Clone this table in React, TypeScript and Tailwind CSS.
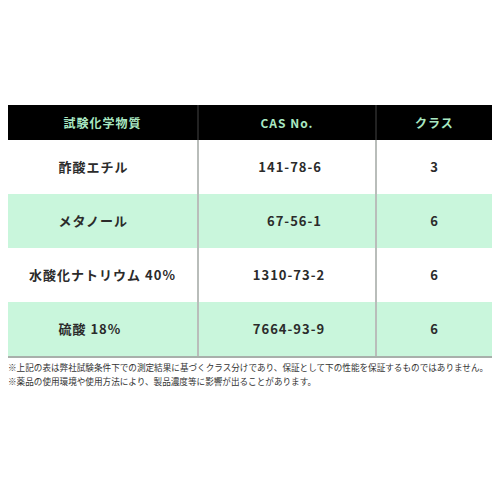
import React from 'react';

interface Row {
  name: string;
  cas: string;
  grade: string;
}

const rows: Row[] = [
  { name: '酢酸エチル', cas: '141-78-6', grade: '3' },
  { name: 'メタノール', cas: '67-56-1', grade: '6' },
  { name: '水酸化ナトリウム 40%', cas: '1310-73-2', grade: '6' },
  { name: '硫酸 18%', cas: '7664-93-9', grade: '6' },
];

export default function App() {
  return (
    <div
      className="w-[500px] h-[500px] bg-white px-2 pt-[105px]"
      style={{ fontFamily: '"Noto Sans CJK JP", "Noto Sans", sans-serif' }}
    >
      {/* Table */}
      <div className="border-b-2 border-[#a8b0ab]">
        <div className="grid grid-cols-[189px_178px_1fr] h-[35px] bg-black text-[#a9e8c2] text-[12px] font-bold tracking-[1px]">
          <div className="flex items-center justify-center">試験化学物質</div>
          <div className="flex items-center justify-center border-l-2 border-[#222]">CAS No.</div>
          <div className="flex items-center justify-center border-l-2 border-[#222]">クラス</div>
        </div>
        {rows.map((r, i) => (
          <div
            key={r.cas}
            className={`grid grid-cols-[189px_178px_1fr] h-[54px] text-[13px] font-bold tracking-[1px] text-[#2b2b2b] ${
              i % 2 === 1 ? 'bg-[#c9f6dc]' : 'bg-white'
            }`}
          >
            <div className="flex items-center justify-center">
              <span className="min-w-[88px] text-left whitespace-nowrap">{r.name}</span>
            </div>
            <div className="flex items-center justify-center border-l-2 border-[#b9bdba]">
              <span className="min-w-[70px] text-right pl-[4px]">{r.cas}</span>
            </div>
            <div className="flex items-center justify-center border-l-2 border-[#b9bdba]">{r.grade}</div>
          </div>
        ))}
      </div>

      {/* Notes */}
      <div className="pt-[2px] text-[8.6px] leading-[14px] text-[#333] whitespace-nowrap">
        <p>※上記の表は弊社試験条件下での測定結果に基づくクラス分けであり、保証として下の性能を保証するものではありません。</p>
        <p>※薬品の使用環境や使用方法により、製品濃度等に影響が出ることがあります。</p>
      </div>
    </div>
  );
}
